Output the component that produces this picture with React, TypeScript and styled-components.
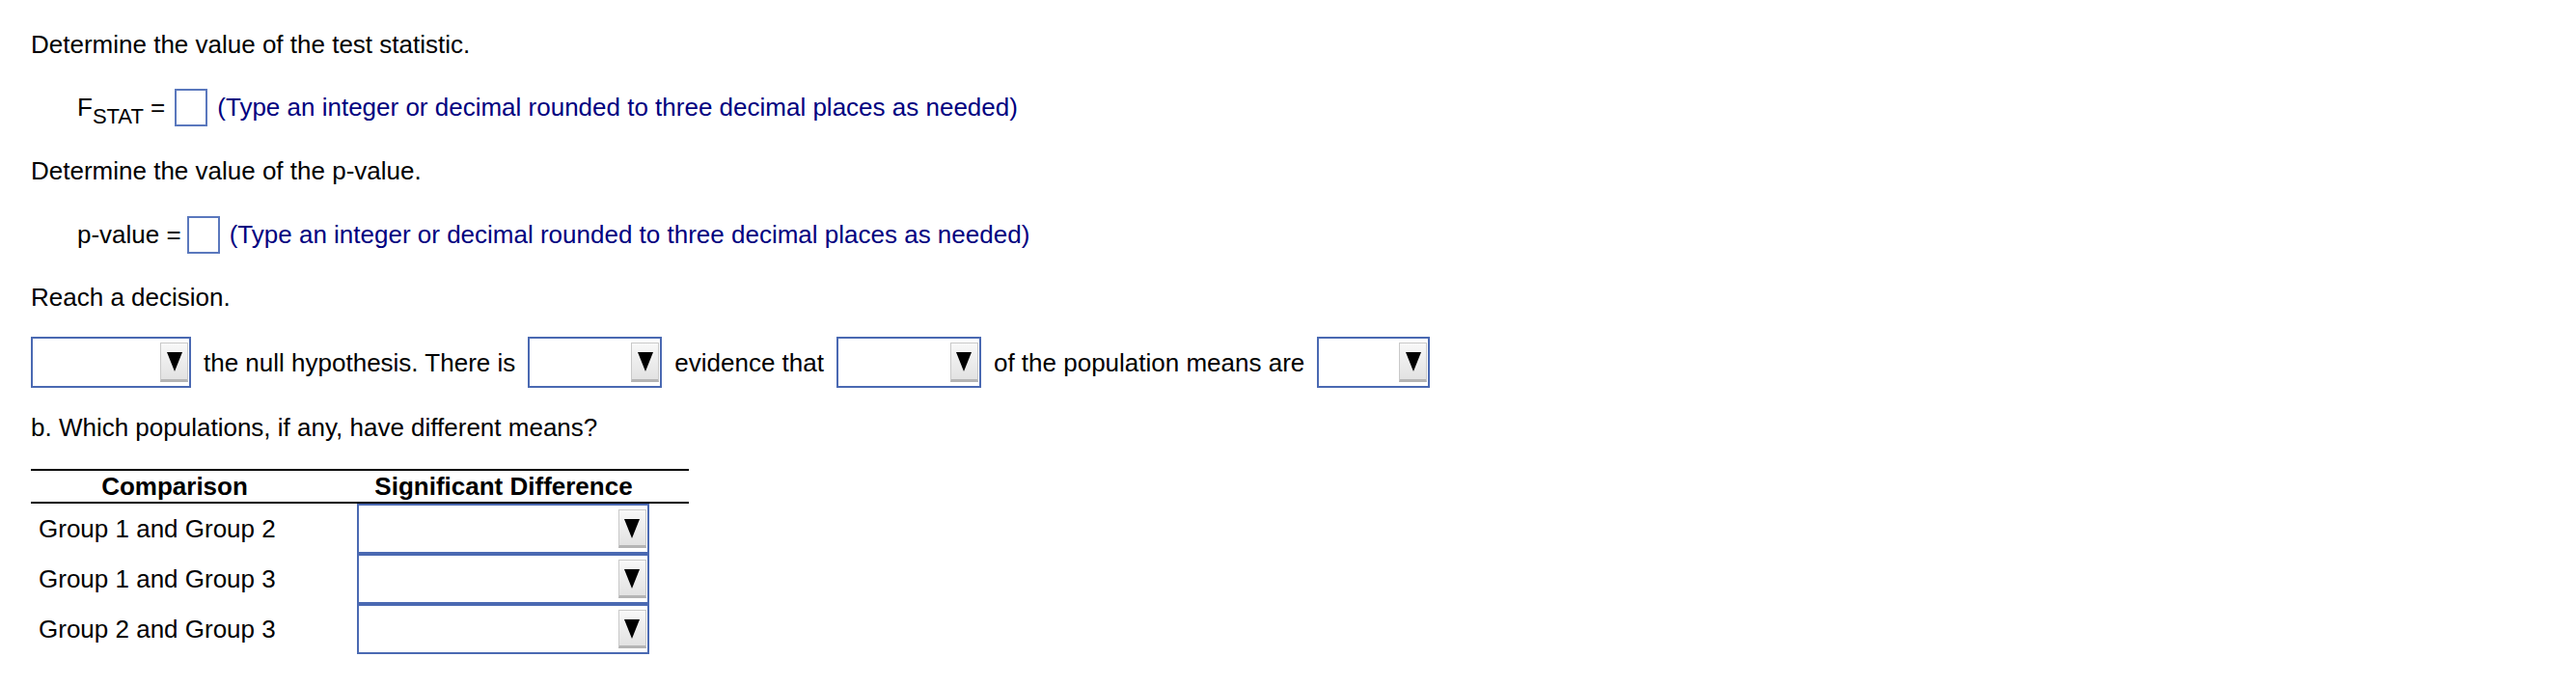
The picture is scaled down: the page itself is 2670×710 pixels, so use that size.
import React from "react";
import styled, { createGlobalStyle } from "styled-components";

const GlobalStyle = createGlobalStyle`
  html, body {
    margin: 0;
    padding: 0;
    background: #ffffff;
  }
  body {
    font-family: "Liberation Sans", Arial, Helvetica, sans-serif;
    font-size: 26px;
    color: #000000;
  }
`;

const Page = styled.div`
  display: flex;
  flex-direction: column;
  align-items: flex-start;
  padding: 31px 0 0 32px;
`;

const Prompt = styled.p<{ $mt?: number }>`
  margin: ${(p) => p.$mt ?? 0}px 0 0 0;
  height: 30px;
  line-height: 30px;
  white-space: nowrap;
`;

const AnswerRow = styled.div<{ $mt: number }>`
  display: flex;
  align-items: center;
  height: 40px;
  margin-top: ${(p) => p.$mt}px;
  padding-left: 48px;
  white-space: nowrap;
`;

const Label = styled.span`
  line-height: 30px;
`;

const Sub = styled.sub`
  font-size: 22px;
  vertical-align: -8px;
  line-height: 0;
`;

const AnswerBox = styled.span<{ $gapLeft: number }>`
  display: inline-block;
  box-sizing: border-box;
  width: 34px;
  height: 39px;
  border: 2px solid #5a78bd;
  background: #ffffff;
  margin: 0 10px 0 ${(p) => p.$gapLeft}px;
`;

const Hint = styled.span`
  color: #000080;
  line-height: 30px;
`;

const DecisionRow = styled.div`
  display: flex;
  align-items: center;
  gap: 13px;
  margin-top: 26px;
  height: 53px;
  white-space: nowrap;
`;

const SelectBox = styled.div<{ $w: number; $h: number }>`
  box-sizing: border-box;
  width: ${(p) => p.$w}px;
  height: ${(p) => p.$h}px;
  border: 2px solid #4a69b2;
  background: #ffffff;
  display: flex;
  justify-content: flex-end;
  align-items: stretch;
  padding: 4px 1px 4px 0;
  flex-shrink: 0;
`;

const SelectButton = styled.div`
  box-sizing: border-box;
  width: 29px;
  border: 1px solid #c9c9c9;
  border-bottom: 3px solid #b4b4b4;
  background: linear-gradient(#f8f8f8, #e2e2e2);
  display: flex;
  align-items: center;
  justify-content: center;
`;

const Arrow = styled.span`
  width: 0;
  height: 0;
  border-left: 8px solid transparent;
  border-right: 8px solid transparent;
  border-top: 20px solid #000000;
  margin-top: 1px;
`;

const Text = styled.span`
  line-height: 30px;
`;

const Table = styled.div`
  margin-top: 28px;
  width: 682px;
  display: grid;
  grid-template-columns: 298px 384px;
  border-top: 2px solid #000000;
`;

const HeadCell = styled.div`
  height: 32px;
  line-height: 32px;
  font-weight: bold;
  text-align: center;
  border-bottom: 2px solid #000000;
  white-space: nowrap;
`;

const RowLabel = styled.div`
  height: 52px;
  display: flex;
  align-items: center;
  padding-left: 8px;
  white-space: nowrap;
`;

const RowSelectCell = styled.div`
  height: 52px;
  display: flex;
  justify-content: center;
  padding-right: 2px;
`;

const Select: React.FC<{ w: number; h: number }> = ({ w, h }) => (
  <SelectBox $w={w} $h={h}>
    <SelectButton>
      <Arrow />
    </SelectButton>
  </SelectBox>
);

const rows = ["Group 1 and Group 2", "Group 1 and Group 3", "Group 2 and Group 3"];

export default function App() {
  return (
    <>
      <GlobalStyle />
      <Page>
        <Prompt>Determine the value of the test statistic.</Prompt>
        <AnswerRow $mt={30}>
          <Label>
            F<Sub>STAT</Sub> =
          </Label>
          <AnswerBox $gapLeft={10} />
          <Hint>(Type an integer or decimal rounded to three decimal places as needed)</Hint>
        </AnswerRow>
        <Prompt $mt={31}>Determine the value of the p-value.</Prompt>
        <AnswerRow $mt={31}>
          <Label>p-value =</Label>
          <AnswerBox $gapLeft={6} />
          <Hint>(Type an integer or decimal rounded to three decimal places as needed)</Hint>
        </AnswerRow>
        <Prompt $mt={30}>Reach a decision.</Prompt>
        <DecisionRow>
          <Select w={166} h={53} />
          <Text>the null hypothesis. There is</Text>
          <Select w={139} h={53} />
          <Text>evidence that</Text>
          <Select w={150} h={53} />
          <Text>of the population means are</Text>
          <Select w={117} h={53} />
        </DecisionRow>
        <Prompt $mt={26}>b. Which populations, if any, have different means?</Prompt>
        <Table>
          <HeadCell>Comparison</HeadCell>
          <HeadCell>Significant Difference</HeadCell>
          {rows.map((r) => (
            <React.Fragment key={r}>
              <RowLabel>{r}</RowLabel>
              <RowSelectCell>
                <Select w={303} h={52} />
              </RowSelectCell>
            </React.Fragment>
          ))}
        </Table>
      </Page>
    </>
  );
}
